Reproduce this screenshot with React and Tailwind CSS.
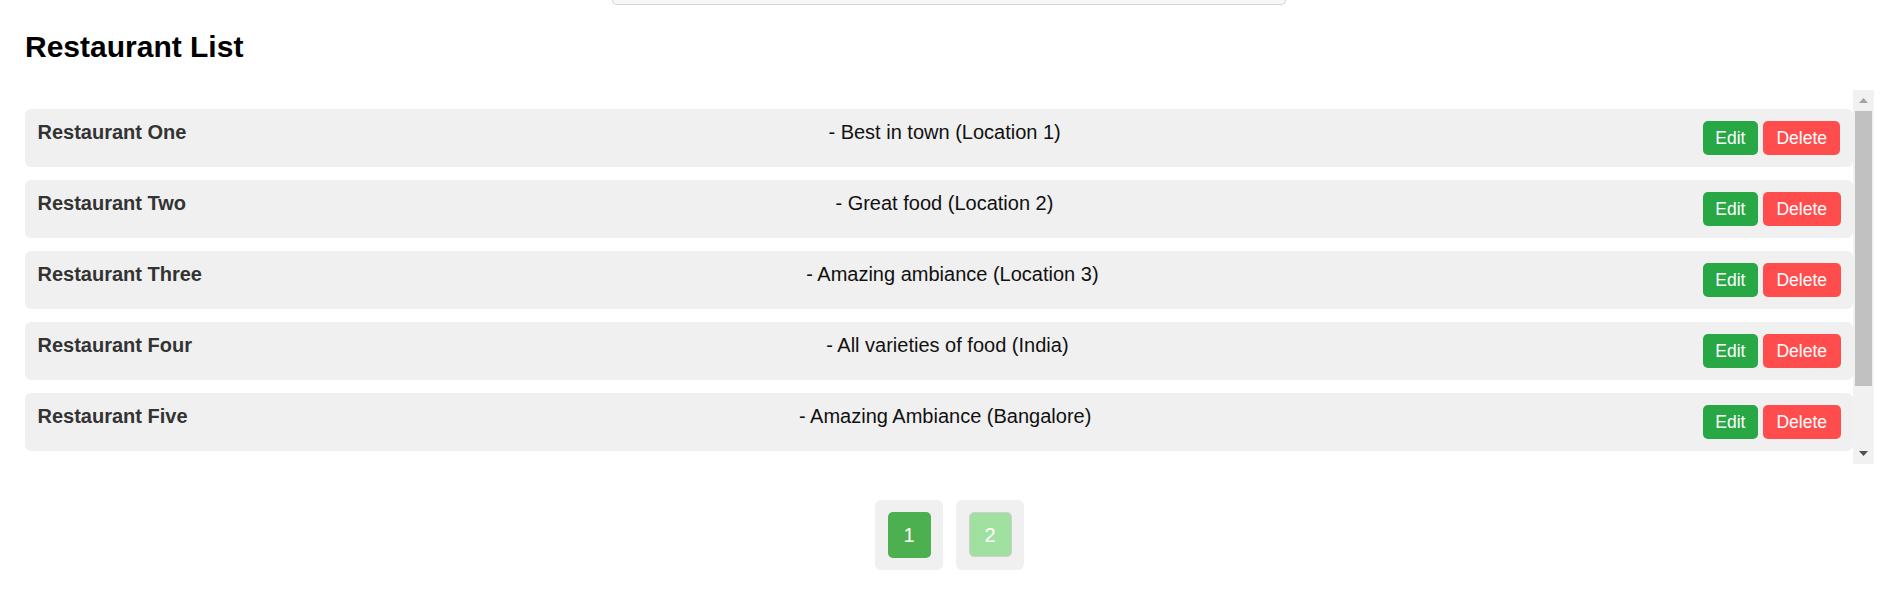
import React from 'react';

const restaurants = [
  { id: 1, name: 'Restaurant One', description: 'Best in town', location: 'Location 1' },
  { id: 2, name: 'Restaurant Two', description: 'Great food', location: 'Location 2' },
  { id: 3, name: 'Restaurant Three', description: 'Amazing ambiance', location: 'Location 3' },
  { id: 4, name: 'Restaurant Four', description: 'All varieties of food', location: 'India' },
  { id: 5, name: 'Restaurant Five', description: 'Amazing Ambiance', location: 'Bangalore' },
];

const RestaurantItem = ({ restaurant }) => (
  <li className="flex h-[58px] items-start justify-between rounded-[6px] bg-[#f0f0f0] p-[12.5px]">
    <strong className="text-[20px] leading-[23px] font-bold text-[#333]">{restaurant.name}</strong>
    <span className="text-[20px] leading-[23px] text-[#111]">
      - {restaurant.description} ({restaurant.location})
    </span>
    <div className="flex gap-[5px]">
      <button className="h-[34px] rounded-[5px] bg-[#28a745] px-[12.5px] text-[17.5px] text-white">Edit</button>
      <button className="h-[34px] rounded-[5px] bg-[#ff4d4d] px-[13.5px] text-[17.5px] text-white">Delete</button>
    </div>
  </li>
);

// drawn scrollbar, same look as the classic chrome one
const ScrollBar = () => (
  <div className="flex w-[21px] flex-col bg-[#f1f1f1]">
    <div className="flex h-[21px] items-center justify-center">
      <svg width="9" height="5" viewBox="0 0 9 5">
        <polygon points="0,5 4.5,0 9,5" fill="#a3a3a3" />
      </svg>
    </div>
    <div className="mx-[2px] h-[275px] bg-[#c1c1c1]" />
    <div className="flex-1" />
    <div className="flex h-[21px] items-center justify-center">
      <svg width="9" height="5" viewBox="0 0 9 5">
        <polygon points="0,0 9,0 4.5,5" fill="#505050" />
      </svg>
    </div>
  </div>
);

export default function App() {
  return (
    <div className="min-h-screen bg-white pl-[25px] pr-[7px] font-['Liberation_Sans',Arial,sans-serif]">
      {/* bottom edge of the search field above */}
      <div className="ml-[587px] h-[5px] w-[674px] rounded-b-[6px] border border-t-0 border-[#d4d4d4] bg-[#f7f7f7]" />

      <h2 className="my-[25px] text-[30px] leading-[34.5px] font-bold text-black">Restaurant List</h2>

      <div className="flex h-[374px]">
        <ul className="flex flex-1 flex-col gap-[13px] pt-[19px]">
          {restaurants.map((r) => (
            <RestaurantItem key={r.id} restaurant={r} />
          ))}
        </ul>
        <ScrollBar />
      </div>

      {/* Pagination */}
      <ul className="mt-[36px] flex justify-center gap-[13px]">
        <li className="flex h-[70px] w-[68px] items-center justify-center rounded-[6px] bg-[#f0f0f0]">
          <button className="h-[46px] w-[43px] rounded-[5px] bg-[#4caf50] text-[20px] text-white">1</button>
        </li>
        <li className="flex h-[70px] w-[68px] items-center justify-center rounded-[6px] bg-[#f0f0f0]">
          <button className="h-[45px] w-[43px] rounded-[5px] border border-[#cfcfcf] bg-[#a0e0a0] text-[20px] text-white">2</button>
        </li>
      </ul>
    </div>
  );
}
